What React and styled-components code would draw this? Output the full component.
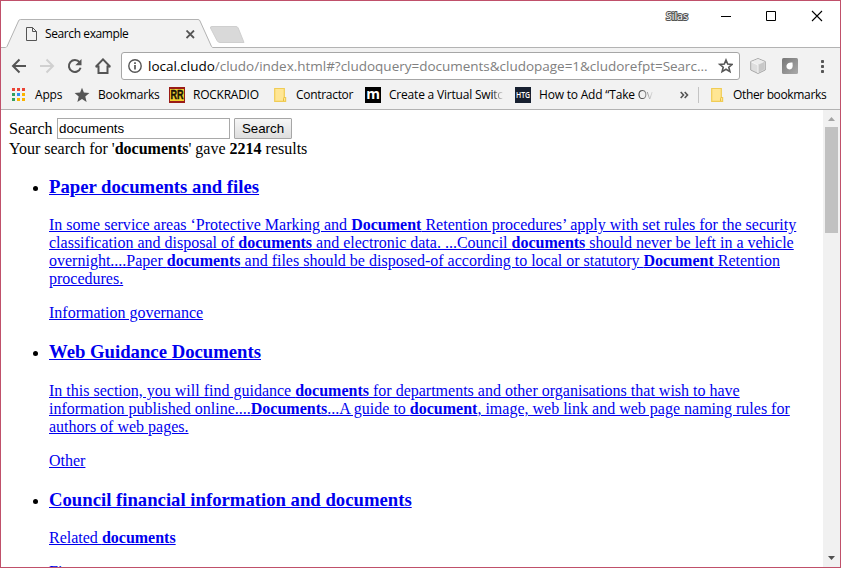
import React from 'react';
import styled, { createGlobalStyle } from 'styled-components';

const GlobalStyle = createGlobalStyle`
  * { box-sizing: border-box; }
  html, body { margin: 0; padding: 0; overflow: hidden; }
`;

const ui = '"Open Sans", "Noto Sans", sans-serif';
const serif = '"Liberation Serif", serif';

const Window = styled.div`
  width: 841px;
  height: 568px;
  border: 1px solid #c0506a;
  background: #fff;
  display: flex;
  flex-direction: column;
  overflow: hidden;
  font-family: ${ui};
  font-size: 12px;
  color: #000;
`;

const TitleBar = styled.header`
  height: 47px;
  flex: none;
  display: flex;
  justify-content: space-between;
  align-items: flex-start;
  position: relative;
`;

const TabOutline = styled.svg`
  position: absolute;
  left: 0;
  top: 0;
  display: block;
`;

const Tab = styled.div`
  position: relative;
  display: flex;
  align-items: center;
  width: 191px;
  height: 28px;
  margin: 19px 0 0 25px;
`;

const TabTitle = styled.span`
  margin-left: 8px;
  flex: 1;
  line-height: 16px;
  letter-spacing: -0.4px;
  white-space: nowrap;
`;

const WindowControls = styled.div`
  position: relative;
  display: flex;
  align-items: center;
  height: 30px;
`;

const UserName = styled.span`
  width: 24px;
  margin-right: 31px;
  font-size: 10.5px;
  line-height: 12px;
  color: #fff;
  -webkit-text-stroke: 2px #555;
  paint-order: stroke fill;
`;

const Toolbar = styled.div`
  height: 35px;
  flex: none;
  display: flex;
  align-items: center;
  padding: 1px 0 0 10px;
  background: #f2f2f2;
`;

const NavIcons = styled.div`
  display: flex;
  width: 110px;
  gap: 12px;
  svg { display: block; }
`;

const Omnibox = styled.div`
  display: flex;
  align-items: center;
  width: 619px;
  height: 28px;
  padding: 0 6px;
  border: 1px solid #a6a6a6;
  border-radius: 3px;
  background: #fff;
  svg { display: block; flex: none; }
`;

const Url = styled.span`
  flex: 1;
  margin-left: 6px;
  font-size: 13.5px;
  line-height: 20px;
  white-space: nowrap;
  letter-spacing: ${(p) => p.$spacing};
  color: #808080;
  b { font-weight: 400; color: #000; }
`;

const Extensions = styled.div`
  display: flex;
  align-items: center;
  gap: 16px;
  margin-left: 10px;
  svg { display: block; }
`;

const BookmarksBar = styled.nav`
  height: 27px;
  flex: none;
  display: flex;
  align-items: center;
  padding: 0 0 3px 8px;
  border-bottom: 1px solid #b2b2b2;
  background: #f2f2f2;
`;

const Bookmark = styled.div`
  display: flex;
  align-items: center;
  width: ${(p) => p.$width}px;
  gap: ${(p) => p.$gap || 8}px;
  flex: none;
  svg { display: block; flex: none; }
`;

const BookmarkLabel = styled.span`
  white-space: nowrap;
  line-height: 18px;
  letter-spacing: ${(p) => p.$spacing || '0'};
`;

const Fade = styled.span`
  background: linear-gradient(90deg, #222, #e4e4e4);
  background-clip: text;
  color: transparent;
`;

const Overflow = styled.div`
  width: 18px;
  svg { display: block; }
`;

const Separator = styled.div`
  width: 1px;
  height: 16px;
  margin-right: 12px;
  background: #c4c4c4;
`;

const Viewport = styled.div`
  flex: 1;
  min-height: 0;
  display: flex;
`;

const Page = styled.main`
  flex: 1;
  overflow: hidden;
  padding: 8px;
  font-family: ${serif};
  font-size: 16px;
  line-height: 18px;
`;

const SearchForm = styled.div`
  display: flex;
  align-items: center;
  height: 21px;
`;

const SearchLabel = styled.label`
  width: 48px;
`;

const SearchInput = styled.input`
  width: 173px;
  height: 21px;
  margin: 0 4px 0 0;
  padding: 1px;
  border: 1px solid #a9a9a9;
  border-radius: 0;
  outline: none;
  font: 13.33px "Liberation Sans", sans-serif;
  color: #000;
`;

const SearchButton = styled.button`
  width: 58px;
  height: 21px;
  padding: 0;
  border: 1px solid #a6a6a6;
  border-radius: 1px;
  background: linear-gradient(#f6f6f6, #dedede);
  font: 13.33px "Liberation Sans", sans-serif;
  color: #000;
`;

const Summary = styled.div`
  padding-top: 1px;
`;

const Results = styled.ul`
  margin: 18px 0 0;
  padding: 0 0 0 40px;
`;

const Result = styled.li`
  height: ${(p) => p.$height}px;
  a { color: #0000ee; text-decoration: underline; }
`;

const ResultTitle = styled.h3`
  margin: 0 0 ${(p) => p.$gap || 19}px;
  font-size: 18.72px;
  line-height: 21px;
  white-space: nowrap;
`;

const Paragraph = styled.p`
  margin: 0 0 16px;
`;

const Line = styled.span`
  display: block;
  white-space: nowrap;
  letter-spacing: ${(p) => p.$spacing || '0'};
`;

const Scrollbar = styled.div`
  width: 17px;
  flex: none;
  display: flex;
  flex-direction: column;
  align-items: center;
  background: #f1f1f1;
  svg { display: block; flex: none; }
`;

const Thumb = styled.div`
  width: 13px;
  height: 106px;
  margin-bottom: auto;
  background: #c1c1c1;
`;

const ArrowIcon = ({ color = '#555', flip }) => (
  <svg width="16" height="16" viewBox="0 0 16 16" fill="none" stroke={color} strokeWidth="2">
    <path d={flip ? 'M1 8H14M7.500 1.500L14 8L7.500 14.500' : 'M15 8H2M8.500 1.500L2 8L8.500 14.500'} />
  </svg>
);

const ReloadIcon = () => (
  <svg width="16" height="16" viewBox="0 0 16 16">
    <path d="M12.6 4.2A6 6 0 1 0 13.6 9.8" fill="none" stroke="#555" strokeWidth="2" />
    <path d="M14.500 1V7.200H8.300Z" fill="#555" />
  </svg>
);

const HomeIcon = () => (
  <svg width="18" height="16" viewBox="0 0 18 16" fill="none" stroke="#555" strokeWidth="2">
    <path d="M.8 8.800L8 1.400L15.200 8.800M3.500 7.500V15H12.500V7.500" />
    <path d="M.6 8.800H4M12 8.800H15.400" strokeWidth="1.4" />
  </svg>
);

const InfoIcon = () => (
  <svg width="14" height="14" viewBox="0 0 14 14">
    <circle cx="7" cy="7" r="6.2" fill="none" stroke="#555" strokeWidth="1.4" />
    <path d="M7 6V10.5M7 3.3V5" stroke="#555" strokeWidth="1.7" />
  </svg>
);

const StarOutline = () => (
  <svg width="16" height="16" viewBox="0 0 16 16">
    <path d="M9 2L10.700 6.100L15.200 6.400L11.800 9.200L12.900 13.600L9 11.200L5.100 13.600L6.200 9.200L2.800 6.400L7.300 6.100Z" fill="none" stroke="#555" strokeWidth="1.6" />
  </svg>
);

const StarIcon = () => (
  <svg width="16" height="16" viewBox="0 0 16 16">
    <path d="M8 .8L9.900 5.600L15.400 6L11.300 9.500L12.600 15L8 12L3.400 15L4.700 9.500L.6 6L6.100 5.600Z" fill="#555" />
  </svg>
);

const appColors = ['#ea4335', '#ea4335', '#ea4335', '#34a060', '#2f8df4', '#fbb400', '#34a060', '#fbb400', '#fbb400'];
const AppsIcon = () => (
  <svg width="18" height="16" viewBox="0 0 18 16">
    {appColors.map((c, i) => (
      <rect key={i} x={3 + (i % 3) * 5} y={1 + Math.floor(i / 3) * 5} width="3" height="3" fill={c} />
    ))}
  </svg>
);

const FolderIcon = () => (
  <svg width="13" height="16" viewBox="0 0 13 16">
    <path d="M.7 1.500H10.300V10.500H11.600V14.300H.7Z" fill="#ffe694" stroke="#f0cc55" strokeWidth="1.2" />
    <path d="M9.500 14V11.500Q9.500 10.500 10.500 10.500" fill="none" stroke="#e8c040" />
  </svg>
);

const RockIcon = () => (
  <svg width="16" height="16" viewBox="0 0 16 16">
    <rect width="16" height="16" fill="#9a1c17" />
    <rect x="1" y="2" width="14" height="12" fill="#efcf30" />
    <text x="8" y="12.400" textAnchor="middle" fontFamily="Liberation Sans" fontWeight="700" fontSize="12" textLength="13" lengthAdjust="spacingAndGlyphs" fill="#171006" stroke="#171006" strokeWidth=".4">RR</text>
  </svg>
);

const MIcon = () => (
  <svg width="16" height="16" viewBox="0 0 16 16">
    <rect width="16" height="16" fill="#000" />
    <text x="8" y="12" textAnchor="middle" fontFamily="Open Sans" fontWeight="700" fontSize="14" fill="#fff">m</text>
  </svg>
);

const HtgIcon = () => (
  <svg width="16" height="16" viewBox="0 0 16 16">
    <rect width="16" height="16" fill="#172030" />
    <text x="8" y="11.300" textAnchor="middle" fontFamily="Open Sans" fontWeight="600" fontSize="9" textLength="14" lengthAdjust="spacingAndGlyphs" fill="#fff">HTG</text>
  </svg>
);

const CubeIcon = () => (
  <svg width="16" height="18" viewBox="0 0 16 18">
    <path d="M8 1.500L15.300 4.500V13L8 16.500L.7 13V4.500Z" fill="#dedede" stroke="#a8a8a8" />
    <path d="M8 2L14.500 4.800L8 7.800L1.500 4.800Z" fill="#ececec" />
    <path d="M8 8L14.300 5V12.200L8 15.800Z" fill="#c8c8c8" />
    <path d="M1.500 5L8 8V16" fill="none" stroke="#f6f6f6" />
  </svg>
);

const LeafIcon = () => (
  <svg width="16" height="16" viewBox="0 0 16 16">
    <defs>
      <linearGradient id="leaf" x2="1" y2="1">
        <stop stopColor="#777" /><stop offset="1" stopColor="#aaa" />
      </linearGradient>
    </defs>
    <rect width="16" height="16" rx="1.5" fill="url(#leaf)" />
    <path d="M10.500 4.500Q11.500 11.500 7.500 11.500Q4 11 4.500 7.500Q5.500 4 10.500 4.500Z" fill="#fff" />
  </svg>
);

const MenuIcon = () => (
  <svg width="17" height="14" viewBox="0 0 17 14" fill="#555">
    <rect x="7" y="1" width="3" height="3" rx=".8" />
    <rect x="7" y="6" width="3" height="3" rx=".8" />
    <rect x="7" y="11" width="3" height="3" rx=".8" />
  </svg>
);

export default function App() {
  return (
    <>
      <GlobalStyle />
      <Window>
        <TitleBar>
          <TabOutline width="839" height="47" viewBox="0 0 839 47">
            <path d="M5.500 47L17.500 19.500Q18 18.500 19.500 18.500H197Q198.500 18.500 199 19.500L211 46.500V47Z" fill="#f2f2f2" />
            <path d="M0 46.500H4.500Q5.500 46.500 6 45.500L17.500 20Q18 18.500 19.500 18.500H197Q198.500 18.500 199 20L210.500 45.500Q211 46.500 212 46.500H839" fill="none" stroke="#b3b3b3" />
            <path d="M211 25.500H235Q236.500 25.500 237.200 27L243 41.500H219Q217 41.500 216 39.500L209.500 27Q209 25.500 211 25.500Z" fill="#d9d9d9" stroke="#cfcfcf" />
          </TabOutline>
          <Tab>
            <svg width="11" height="14" viewBox="0 0 11 14" fill="none" stroke="#555">
              <path d="M.5 .5H6.500L10.500 4.500V13.500H.5Z M6.500 .5V4.500H10.500" />
            </svg>
            <TabTitle>Search example</TabTitle>
            <svg width="31" height="9" viewBox="0 0 31 9" stroke="#555" strokeWidth="1.8">
              <path d="M.5 .5L8 8M8 .5L.5 8" />
            </svg>
          </Tab>
          <WindowControls>
            <UserName>Silas</UserName>
            <svg width="119" height="13" viewBox="0 0 119 13" fill="none" stroke="#000">
              <path d="M0 6.500H10" />
              <path d="M45.500 1.500H54.500V10.500H45.500Z" />
              <path d="M91 1L101 11M101 1L91 11" strokeWidth="1.1" />
            </svg>
          </WindowControls>
        </TitleBar>
        <Toolbar>
          <NavIcons>
            <ArrowIcon />
            <ArrowIcon flip color="#d0d0d0" />
            <ReloadIcon />
            <HomeIcon />
          </NavIcons>
          <Omnibox>
            <InfoIcon />
            <Url $spacing="-0.015px"><b>local.cludo</b>/cludo/index.html#?cludoquery=documents&amp;cludopage=1&amp;cludorefpt=Searc...</Url>
            <StarOutline />
          </Omnibox>
          <Extensions>
            <CubeIcon />
            <LeafIcon />
            <MenuIcon />
          </Extensions>
        </Toolbar>
        <BookmarksBar>
          <Bookmark $width={65}><AppsIcon /><BookmarkLabel $spacing="-0.2px">Apps</BookmarkLabel></Bookmark>
          <Bookmark $width={95}><StarIcon /><BookmarkLabel $spacing="-0.18px">Bookmarks</BookmarkLabel></Bookmark>
          <Bookmark $width={105}><RockIcon /><BookmarkLabel $spacing="-0.25px">ROCKRADIO</BookmarkLabel></Bookmark>
          <Bookmark $width={91} $gap={9}><FolderIcon /><BookmarkLabel $spacing="-0.3px">Contractor</BookmarkLabel></Bookmark>
          <Bookmark $width={150}><MIcon /><BookmarkLabel $spacing="-0.2px">Create a Virtual Swi<Fade>tc</Fade></BookmarkLabel></Bookmark>
          <Bookmark $width={165}><HtgIcon /><BookmarkLabel $spacing="-0.2px">How to Add “Take <Fade>Ov</Fade></BookmarkLabel></Bookmark>
          <Overflow>
            <svg width="9" height="8" viewBox="0 0 9 8" fill="none" stroke="#555" strokeWidth="1.6"><path d="M.7 1L3.500 4L.7 7M4.700 1L7.500 4L4.700 7" /></svg>
          </Overflow>
          <Separator />
          <Bookmark $width={120} $gap={9}><FolderIcon /><BookmarkLabel $spacing="-0.35px">Other bookmarks</BookmarkLabel></Bookmark>
        </BookmarksBar>
        <Viewport>
          <Page>
            <SearchForm>
              <SearchLabel>Search</SearchLabel>
              <SearchInput defaultValue="documents" />
              <SearchButton>Search</SearchButton>
            </SearchForm>
            <Summary>Your search for '<b>documents</b>' gave <b>2214</b> results</Summary>
            <Results>
              <Result $height={165}>
                <a>
                  <ResultTitle>Paper documents and files</ResultTitle>
                  <Paragraph>
                    <Line $spacing="0.01px">In some service areas ‘Protective Marking and <b>Document</b> Retention procedures’ apply with set rules for the security</Line>
                    <Line>classification and disposal of <b>documents</b> and electronic data. ...Council <b>documents</b> should never be left in a vehicle</Line>
                    <Line>overnight....Paper <b>documents</b> and files should be disposed-of according to local or statutory <b>Document</b> Retention</Line>
                    <Line>procedures.</Line>
                  </Paragraph>
                  <Paragraph><Line>Information governance</Line></Paragraph>
                </a>
              </Result>
              <Result $height={148}>
                <a>
                  <ResultTitle $gap={20}>Web Guidance Documents</ResultTitle>
                  <Paragraph>
                    <Line>In this section, you will find guidance <b>documents</b> for departments and other organisations that wish to have</Line>
                    <Line>information published online....<b>Documents</b>...A guide to <b>document</b>, image, web link and web page naming rules for</Line>
                    <Line>authors of web pages.</Line>
                  </Paragraph>
                  <Paragraph><Line>Other</Line></Paragraph>
                </a>
              </Result>
              <Result $height={148}>
                <a>
                  <ResultTitle>Council financial information and documents</ResultTitle>
                  <Paragraph><Line>Related <b>documents</b></Line></Paragraph>
                  <Paragraph><Line>Finance</Line></Paragraph>
                </a>
              </Result>
            </Results>
          </Page>
          <Scrollbar>
            <svg width="17" height="17" viewBox="0 0 17 17"><path d="M5 11L8.500 7L12 11Z" fill="#a3a3a3" /></svg>
            <Thumb />
            <svg width="17" height="17" viewBox="0 0 17 17"><path d="M5 6L8.500 10L12 6Z" fill="#505050" /></svg>
          </Scrollbar>
        </Viewport>
      </Window>
    </>
  );
}
